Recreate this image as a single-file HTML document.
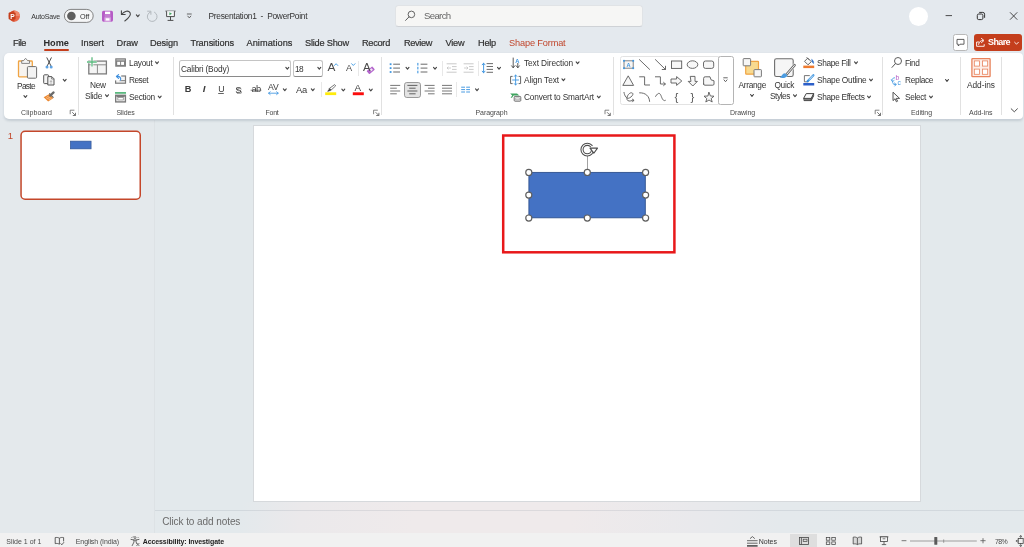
<!DOCTYPE html>
<html lang="en"><head><meta charset="utf-8"><title>Presentation1 - PowerPoint</title>
<style>
html,body{margin:0;padding:0;}
body{width:1024px;height:547px;overflow:hidden;position:relative;background:#e3e9ec;font-family:"Liberation Sans",sans-serif;}
.a{position:absolute;box-sizing:border-box;}
.t{position:absolute;white-space:pre;font-family:"Liberation Sans",sans-serif;}
#top{left:0;top:0;width:1024px;height:120px;background:#e4e9ee;}
#ribbon{left:4px;top:53px;width:1019px;height:66px;background:#fff;border-radius:5px 4px 4px 5px;box-shadow:0 1.2px 2.4px rgba(70,90,105,0.19);}
#search{left:395px;top:5px;width:248px;height:22px;background:#f6f6f5;border-radius:3.5px;border:1px solid #e0e3e6;border-bottom-color:#cfd2d6;}
#avatar{left:908.5px;top:7px;width:19px;height:19px;border-radius:50%;background:#fff;}
#comment{left:952.5px;top:34px;width:15.5px;height:16.6px;border-radius:2.5px;background:#fff;border:0.7px solid #b8b8b8;}
#share{left:973.5px;top:34px;width:48px;height:16.6px;border-radius:3px;background:#c43e1c;}
#homeul{left:43.5px;top:49px;width:25.5px;height:2px;background:#c43e1c;border-radius:1px;}
.sep{width:1px;background:#e1e1e1;}
.sep2{width:1px;background:#e8e8e8;}
#txt{position:absolute;left:0;top:0;width:1024px;height:547px;will-change:transform;}
#left{left:0;top:120px;width:154px;height:413px;background:#e4e9ec;}
#vdiv{left:154px;top:120px;width:1px;height:413px;background:#dde2e5;}
#work{left:155px;top:120px;width:869px;height:390px;background:#e3e9ec;}
#notes{left:155px;top:502px;width:869px;height:31px;background:linear-gradient(100deg,#e3e9ec 0%,#e3e9ec 10%,#ebe9eb 17%,#efeaeb 30%,#efeaeb 48%,#e9e9ec 62%,#e4e9ec 72%,#e3e9ec 100%);}
#notesline{left:155px;top:510px;width:869px;height:1px;background:rgba(120,130,140,0.16);}
#slide{left:253px;top:125px;width:668px;height:377px;background:#fff;border:1px solid #d6d9dc;}
#status{left:0;top:533px;width:1024px;height:14px;background:#f1f1f1;}
#thumb{left:20.3px;top:130.5px;width:120.7px;height:69.5px;background:#fff;border:1.3px solid #c2492c;border-radius:4.5px;}
#thumbrect{left:70px;top:140.8px;width:21.4px;height:8.4px;background:#4472c4;border:0.6px solid #2f528f;}
#fontbox{left:179px;top:60px;width:112px;height:16.5px;border:0.8px solid #c4c4c4;border-bottom-color:#8a8a8a;border-radius:2.5px;background:#fff;}
#sizebox{left:293px;top:60px;width:30px;height:16.5px;border:0.8px solid #c4c4c4;border-bottom-color:#8a8a8a;border-radius:2.5px;background:#fff;}
#centersel{left:404px;top:81.5px;width:16.5px;height:16px;border:0.8px solid #9a9a9a;border-radius:2.8px;background:#e3e3e3;}
#gallery{left:619.5px;top:56.3px;width:99px;height:48.7px;border:0.8px solid #e3e3e3;border-radius:2.5px 0 0 2.5px;background:#fff;}
#gallmore{left:717.5px;top:56px;width:16px;height:49px;border:0.8px solid #b4b4b4;border-radius:2.5px;background:#fff;}
#normsel{left:790.3px;top:534px;width:26.5px;height:13px;background:#dedede;}
#shape{left:528.5px;top:172px;width:117px;height:46px;background:#4472c4;border:0.8px solid #2f528f;}
#redbox{left:502px;top:134.3px;width:173.6px;height:119.2px;border:2.5px solid #e8191b;}
svg#ic{position:absolute;left:0;top:0;will-change:transform;}

</style></head>
<body>
<div class="a" id="top"></div>
<div class="a" id="left"></div>
<div class="a" id="work"></div>
<div class="a" id="vdiv"></div>
<div class="a" id="notes"></div>
<div class="a" id="notesline"></div>
<div class="a" id="status"></div>
<div class="a" id="normsel"></div>
<div class="a" id="ribbon"></div>
<div class="a" id="search"></div>
<div class="a" id="avatar"></div>
<div class="a" id="comment"></div>
<div class="a" id="share"></div>
<div class="a" id="homeul"></div>
<div class="a sep" style="left:78px;top:57px;height:58px"></div>
<div class="a sep" style="left:173px;top:57px;height:58px"></div>
<div class="a sep" style="left:381px;top:57px;height:58px"></div>
<div class="a sep" style="left:612.5px;top:57px;height:58px"></div>
<div class="a sep" style="left:882px;top:57px;height:58px"></div>
<div class="a sep" style="left:960px;top:57px;height:58px"></div>
<div class="a sep" style="left:1001px;top:57px;height:58px"></div>
<div class="a sep2" style="left:358px;top:60.5px;height:15.5px"></div>
<div class="a sep2" style="left:321px;top:82px;height:15px"></div>
<div class="a sep2" style="left:442px;top:60.5px;height:15.5px"></div>
<div class="a sep2" style="left:478px;top:60.5px;height:15.5px"></div>
<div class="a sep2" style="left:456px;top:82px;height:15px"></div>
<div class="a" id="fontbox"></div>
<div class="a" id="sizebox"></div>
<div class="a" id="centersel"></div>
<div class="a" id="gallery"></div>
<div class="a" id="gallmore"></div>
<div class="a" id="slide"></div>

<svg id="ic" width="1024" height="547" viewBox="0 0 1024 547" fill="none">
<circle cx="14.4" cy="16.1" r="5.6" fill="#e8694b"/>
<path d="M14.4,10.5 A5.6,5.6 0 0 0 14.4,21.7 Z" fill="#d24a2a"/>
<path d="M14.4,10.5 A5.6,5.6 0 0 1 20,16.1 H14.4 Z" fill="#f08a6c"/>
<rect x="8.6" y="12.6" width="7" height="7" rx="1" fill="#c43e1c"/>
<text x="10.2" y="18.6" font-family="Liberation Sans, sans-serif" font-weight="bold" font-size="6.6" fill="#fff">P</text>
<rect x="64.4" y="9.4" width="28.8" height="13" rx="6.5" fill="#f5f6f7" stroke="#666" stroke-width="0.8"/>
<circle cx="71.4" cy="16" r="4.3" fill="#5e5e5e"/>
<rect x="102" y="10.7" width="11" height="11" rx="1.6" fill="#b65bc6"/>
<rect x="105" y="11.6" width="5.2" height="2.6" fill="#fff"/>
<rect x="104.6" y="14.2" width="6" height="3.6" fill="#c47fd1"/>
<rect x="104.4" y="17.4" width="6.4" height="4.3" fill="#d9a8e2"/>
<rect x="105.8" y="18.3" width="3.6" height="2.2" fill="#fff"/>
<path d="M124.8,21 C128.5,18.3 131.6,15.3 130,12.6 C128.3,9.9 124.6,11.2 121.8,14" stroke="#444" stroke-width="1.05" stroke-linecap="round"/>
<path d="M121.4,10.8 V14.5 H125.2" stroke="#444" stroke-width="1.05" stroke-linecap="round" stroke-linejoin="round"/>
<path d="M136.35,14.90 L137.80,16.70 L139.25,14.90" stroke="#444" stroke-width="1.1" stroke-linecap="round" stroke-linejoin="round"/>
<path d="M150.6,11.9 A4.9,4.9 0 1 0 154.5,12.2" stroke="#b3b9be" stroke-width="1" stroke-linecap="round"/>
<path d="M147.6,11.2 H150.9 V14.4" stroke="#b3b9be" stroke-width="1" stroke-linecap="round" stroke-linejoin="round"/>
<path d="M165.4,11.1 L175.6,11.1" stroke="#444" stroke-width="0.8" stroke-linecap="butt"/>
<path d="M166.6,11.2 V16.6 H174.4 V11.2" fill="#f4f6f7" stroke="#444" stroke-width="0.95"/>
<path d="M169.4,12.3 V15.3 L172,13.8 Z" fill="#3fa45f"/>
<path d="M170.5,16.6 L170.5,20.2" stroke="#444" stroke-width="0.95" stroke-linecap="butt"/>
<path d="M167.6,20.4 L173.4,20.4" stroke="#444" stroke-width="0.95" stroke-linecap="butt"/>
<path d="M186.9,14 L191.7,14" stroke="#555" stroke-width="0.9" stroke-linecap="butt"/>
<path d="M187.80,16.10 L189.30,17.90 L190.80,16.10" stroke="#555" stroke-width="0.9" stroke-linecap="round" stroke-linejoin="round"/>
<circle cx="411.4" cy="14.4" r="3.3" stroke="#5c5c5c" stroke-width="0.95"/>
<path d="M409,16.9 L405.6,20.4" stroke="#5c5c5c" stroke-width="1" stroke-linecap="round"/>
<path d="M945.6,15.6 L952,15.6" stroke="#3a3a3a" stroke-width="0.9" stroke-linecap="butt"/>
<rect x="977.3" y="14" width="5.6" height="5.6" rx="1.4" stroke="#333" stroke-width="1"/>
<path d="M979.2,12.4 H982.8 A1.8,1.8 0 0 1 984.6,14.2 V17.8" stroke="#333" stroke-width="1"/>
<path d="M1010.3,12.6 L1017,19.4 M1017,12.6 L1010.3,19.4" stroke="#3a3a3a" stroke-width="0.9" stroke-linecap="round"/>
<path d="M957,39.4 H964 V44.2 H960 L958.3,46 V44.2 H957 Z" stroke="#444" stroke-width="0.85" stroke-linejoin="round"/>
<path d="M979.2,42 H976.6 V46.3 H984.2 V44.2" stroke="#fff" stroke-width="0.9" stroke-linejoin="round"/>
<path d="M978.6,44.4 C979,41.8 980.6,40.6 982.6,40.5 M981.4,38.4 L984,40.5 L981.4,42.7" stroke="#fff" stroke-width="0.9" stroke-linecap="round" stroke-linejoin="round"/>
<path d="M1014.60,42.25 L1016.50,44.15 L1018.40,42.25" stroke="#fff" stroke-width="0.9" stroke-linecap="round" stroke-linejoin="round"/>
<rect x="18.5" y="61" width="13.8" height="15.8" rx="0.8" fill="#f7f4f0" stroke="#f0a443" stroke-width="1.3"/>
<path d="M21.7,63.4 V60.7 H23.5 L25.6,58.3 L27.7,60.7 H29.5 V63.4 Z" fill="#f4f4f4" stroke="#7a7a7a" stroke-width="0.9" stroke-linejoin="round"/>
<rect x="27.4" y="66.6" width="9.2" height="11.6" rx="1" fill="#f3f3f3" stroke="#6e6e6e" stroke-width="1"/>
<path d="M23.95,95.60 L25.40,97.40 L26.85,95.60" stroke="#444" stroke-width="1.1" stroke-linecap="round" stroke-linejoin="round"/>
<path d="M46.9,57.8 L50.8,65.6 M51.3,57.8 L47.4,65.6" stroke="#4a4a4a" stroke-width="1" stroke-linecap="round"/>
<circle cx="47" cy="66.9" r="1.5" fill="#5ea3e4"/><circle cx="51.2" cy="66.9" r="1.5" fill="#5ea3e4"/>
<rect x="43.7" y="74.8" width="4.9" height="8.8" rx="0.8" fill="#f4f4f4" stroke="#555" stroke-width="1"/>
<path d="M47.8,76.6 H51.8 L54,78.8 V85 H47.8 Z" fill="#f1f1f1" stroke="#555" stroke-width="1" stroke-linejoin="round"/>
<path d="M51.6,76.8 V79 H53.8" stroke="#5e5e5e" stroke-width="0.7"/>
<path d="M49.8,81.4 H52.2 M51,80 V84" stroke="#9a9a9a" stroke-width="0.6"/>
<path d="M63.25,79.40 L64.70,81.20 L66.15,79.40" stroke="#444" stroke-width="1.1" stroke-linecap="round" stroke-linejoin="round"/>
<path d="M43.6,97.2 L49.8,93.8 L53.2,98.2 L48.2,101.6 Z" fill="#ec8a33"/>
<path d="M46,97.6 L50.4,99.8 M47.2,96.4 L51.6,98.7" stroke="#fbd9b8" stroke-width="0.6"/>
<path d="M50.2,95.6 L53.6,92.4" stroke="#6a6a6a" stroke-width="2.2" stroke-linecap="round"/>
<path d="M49.6,93.6 L53.2,97.4" stroke="#6a6a6a" stroke-width="1.1" stroke-linecap="round"/>
<path d="M70.2,114.2 V110.2 H74.4" stroke="#666" stroke-width="0.8"/>
<path d="M72.2,112.2 L75.4,115.4 M75.5,112.8 V115.5 H72.8" stroke="#555" stroke-width="0.8"/>
<rect x="88.8" y="61.1" width="17.6" height="12.8" fill="#f4f4f4" stroke="#7d7d7d" stroke-width="1.3"/>
<path d="M88.8,64.8 H106.4 M97.4,64.8 V73.9" stroke="#8a8a8a" stroke-width="1"/>
<path d="M87,62 H96.8 M92,57.3 V66.5" stroke="#fff" stroke-width="2.6"/>
<path d="M87,62 H96.8 M92,57.3 V66.5" stroke="#5bb97f" stroke-width="1.3"/>
<path d="M105.55,94.80 L107.00,96.60 L108.45,94.80" stroke="#444" stroke-width="1.1" stroke-linecap="round" stroke-linejoin="round"/>
<rect x="115.2" y="58.2" width="10.8" height="8.5" rx="0.5" fill="#808080"/>
<rect x="116.4" y="59.5" width="8.4" height="0.9" fill="#d4d4d4"/>
<rect x="117.2" y="61.8" width="2.9" height="3.1" fill="#fff"/>
<rect x="121.1" y="61.8" width="2.9" height="3.1" fill="#fff"/>
<path d="M155.55,61.90 L157.00,63.70 L158.45,61.90" stroke="#444" stroke-width="1.1" stroke-linecap="round" stroke-linejoin="round"/>
<rect x="115.6" y="76" width="9.9" height="7.2" fill="#f4f4f4" stroke="#7b7b7b" stroke-width="1.2"/>
<path d="M119.4,80.6 H125" stroke="#8d8d8d" stroke-width="1.2"/>
<path d="M114.8,74 h6.4 v6.4 h-6.4 Z" fill="#fff"/>
<path d="M120.6,80.2 C121.2,77.6 119.8,76.2 117,76.4" stroke="#3f8fdd" stroke-width="1.1" stroke-linecap="round"/>
<path d="M118.6,74.6 L116.4,76.5 L118.6,78.4" stroke="#3f8fdd" stroke-width="1.1" stroke-linecap="round" stroke-linejoin="round"/>
<rect x="115" y="92" width="11" height="1.8" fill="#5bb97f"/>
<rect x="115.7" y="95.3" width="9.7" height="6.6" fill="#fff" stroke="#7b7b7b" stroke-width="1.4"/>
<rect x="117.8" y="97.4" width="5.5" height="2.6" fill="#fff" stroke="#8c8c8c" stroke-width="0.8"/>
<path d="M116.4,96.4 H124.7" stroke="#7b7b7b" stroke-width="1.2"/>
<path d="M158.25,96.10 L159.70,97.90 L161.15,96.10" stroke="#444" stroke-width="1.1" stroke-linecap="round" stroke-linejoin="round"/>
<path d="M285.85,67.40 L287.30,69.20 L288.75,67.40" stroke="#444" stroke-width="1.1" stroke-linecap="round" stroke-linejoin="round"/>
<path d="M317.85,67.40 L319.30,69.20 L320.75,67.40" stroke="#444" stroke-width="1.1" stroke-linecap="round" stroke-linejoin="round"/>
<path d="M334.4,65.5 L336.1,63.7 L337.8,65.5" stroke="#4fa3e6" stroke-width="1" stroke-linecap="round" stroke-linejoin="round"/>
<path d="M351.6,63.7 L353.3,65.5 L355,63.7" stroke="#4fa3e6" stroke-width="1" stroke-linecap="round" stroke-linejoin="round"/>
<g transform="translate(370.7,70.3) rotate(-40)"><rect x="-3.7" y="-2.1" width="7.4" height="4.2" rx="0.6" fill="#b366cc"/><rect x="-0.6" y="-1.1" width="2.6" height="2.2" fill="#f3e4f7"/></g>
<path d="M218.2,93.5 L223.8,93.5" stroke="#3b3b3b" stroke-width="0.8" stroke-linecap="butt"/>
<path d="M250.6,90.2 L261.4,90.2" stroke="#555" stroke-width="0.7" stroke-linecap="butt"/>
<path d="M268.6,93.2 H278.2 M270.2,91.8 L268.6,93.2 L270.2,94.6 M276.6,91.8 L278.2,93.2 L276.6,94.6" stroke="#3f96e0" stroke-width="0.85" stroke-linecap="round" stroke-linejoin="round"/>
<path d="M283.35,88.90 L284.80,90.70 L286.25,88.90" stroke="#444" stroke-width="1.1" stroke-linecap="round" stroke-linejoin="round"/>
<path d="M311.35,88.90 L312.80,90.70 L314.25,88.90" stroke="#444" stroke-width="1.1" stroke-linecap="round" stroke-linejoin="round"/>
<path d="M334.6,84.6 L335.7,85.8 L330.6,90.6 L328.8,88.9 Z" fill="#fff" stroke="#555" stroke-width="0.8" stroke-linejoin="round"/>
<path d="M329.8,88.2 L331.3,89.8 L329,91.4 H327 Z" fill="#4a4a4a"/>
<rect x="325.2" y="92.3" width="11" height="2.8" fill="#ffeb0a"/>
<path d="M341.85,89.10 L343.30,90.90 L344.75,89.10" stroke="#444" stroke-width="1.1" stroke-linecap="round" stroke-linejoin="round"/>
<rect x="352.8" y="92.3" width="11" height="2.9" fill="#fb0d0d"/>
<path d="M369.35,89.10 L370.80,90.90 L372.25,89.10" stroke="#444" stroke-width="1.1" stroke-linecap="round" stroke-linejoin="round"/>
<path d="M373.6,114.2 V110.2 H377.8" stroke="#666" stroke-width="0.8"/>
<path d="M375.6,112.2 L378.8,115.4 M378.90000000000003,112.8 V115.5 H376.20000000000005" stroke="#555" stroke-width="0.8"/>
<rect x="389.7" y="63.300000000000004" width="1.8" height="1.8" fill="#3f96e0"/>
<path d="M393.2,64.2 L400,64.2" stroke="#707070" stroke-width="1.05" stroke-linecap="butt"/>
<rect x="389.7" y="67.19999999999999" width="1.8" height="1.8" fill="#3f96e0"/>
<path d="M393.2,68.1 L400,68.1" stroke="#707070" stroke-width="1.05" stroke-linecap="butt"/>
<rect x="389.7" y="71.1" width="1.8" height="1.8" fill="#3f96e0"/>
<path d="M393.2,72 L400,72" stroke="#707070" stroke-width="1.05" stroke-linecap="butt"/>
<path d="M406.05,67.40 L407.50,69.20 L408.95,67.40" stroke="#444" stroke-width="1.1" stroke-linecap="round" stroke-linejoin="round"/>
<rect x="417.3" y="62.900000000000006" width="1.1" height="2.6" fill="#3f96e0"/>
<path d="M420.6,64.2 L427.4,64.2" stroke="#707070" stroke-width="1.05" stroke-linecap="butt"/>
<rect x="417.3" y="66.8" width="1.1" height="2.6" fill="#3f96e0"/>
<path d="M420.6,68.1 L427.4,68.1" stroke="#707070" stroke-width="1.05" stroke-linecap="butt"/>
<rect x="417.3" y="70.7" width="1.1" height="2.6" fill="#3f96e0"/>
<path d="M420.6,72 L427.4,72" stroke="#707070" stroke-width="1.05" stroke-linecap="butt"/>
<path d="M433.55,67.40 L435.00,69.20 L436.45,67.40" stroke="#444" stroke-width="1.1" stroke-linecap="round" stroke-linejoin="round"/>
<path d="M446.6,63.8 L456.6,63.8" stroke="#c4c4c4" stroke-width="0.9" stroke-linecap="butt"/>
<path d="M446.6,72.2 L456.6,72.2" stroke="#c4c4c4" stroke-width="0.9" stroke-linecap="butt"/>
<path d="M452.0,66.6 L456.6,66.6" stroke="#c4c4c4" stroke-width="0.9" stroke-linecap="butt"/>
<path d="M452.0,69.4 L456.6,69.4" stroke="#c4c4c4" stroke-width="0.9" stroke-linecap="butt"/>
<path d="M463.6,63.8 L473.6,63.8" stroke="#c4c4c4" stroke-width="0.9" stroke-linecap="butt"/>
<path d="M463.6,72.2 L473.6,72.2" stroke="#c4c4c4" stroke-width="0.9" stroke-linecap="butt"/>
<path d="M469.0,66.6 L473.6,66.6" stroke="#c4c4c4" stroke-width="0.9" stroke-linecap="butt"/>
<path d="M469.0,69.4 L473.6,69.4" stroke="#c4c4c4" stroke-width="0.9" stroke-linecap="butt"/>
<path d="M451,68 H447 M448.4,66.6 L447,68 L448.4,69.4" stroke="#c4c4c4" stroke-width="0.8"/>
<path d="M464,68 H468 M466.6,66.6 L468,68 L466.6,69.4" stroke="#c4c4c4" stroke-width="0.8"/>
<path d="M486.6,63.6 L493,63.6" stroke="#707070" stroke-width="1.05" stroke-linecap="butt"/>
<path d="M486.6,66.5 L493,66.5" stroke="#707070" stroke-width="1.05" stroke-linecap="butt"/>
<path d="M486.6,69.4 L493,69.4" stroke="#707070" stroke-width="1.05" stroke-linecap="butt"/>
<path d="M486.6,72.3 L493,72.3" stroke="#707070" stroke-width="1.05" stroke-linecap="butt"/>
<path d="M483.6,63.2 V72.8 M482.2,64.8 L483.6,63.2 L485,64.8 M482.2,71.2 L483.6,72.8 L485,71.2" stroke="#3f96e0" stroke-width="0.95" stroke-linecap="round" stroke-linejoin="round"/>
<path d="M497.55,67.40 L499.00,69.20 L500.45,67.40" stroke="#444" stroke-width="1.1" stroke-linecap="round" stroke-linejoin="round"/>
<path d="M390.2,85.4 L400.2,85.4" stroke="#707070" stroke-width="0.95" stroke-linecap="butt"/>
<path d="M390.2,88.2 L396.8,88.2" stroke="#707070" stroke-width="0.95" stroke-linecap="butt"/>
<path d="M390.2,91 L400.2,91" stroke="#707070" stroke-width="0.95" stroke-linecap="butt"/>
<path d="M390.2,93.8 L396.8,93.8" stroke="#707070" stroke-width="0.95" stroke-linecap="butt"/>
<path d="M407.4,85.4 L417.4,85.4" stroke="#5a5a5a" stroke-width="0.95" stroke-linecap="butt"/>
<path d="M409.2,88.2 L415.59999999999997,88.2" stroke="#5a5a5a" stroke-width="0.95" stroke-linecap="butt"/>
<path d="M407.4,91 L417.4,91" stroke="#5a5a5a" stroke-width="0.95" stroke-linecap="butt"/>
<path d="M409.2,93.8 L415.59999999999997,93.8" stroke="#5a5a5a" stroke-width="0.95" stroke-linecap="butt"/>
<path d="M424.6,85.4 L434.6,85.4" stroke="#707070" stroke-width="0.95" stroke-linecap="butt"/>
<path d="M428.0,88.2 L434.6,88.2" stroke="#707070" stroke-width="0.95" stroke-linecap="butt"/>
<path d="M424.6,91 L434.6,91" stroke="#707070" stroke-width="0.95" stroke-linecap="butt"/>
<path d="M428.0,93.8 L434.6,93.8" stroke="#707070" stroke-width="0.95" stroke-linecap="butt"/>
<path d="M442,85.4 L452,85.4" stroke="#707070" stroke-width="0.95" stroke-linecap="butt"/>
<path d="M442,88.2 L452,88.2" stroke="#707070" stroke-width="0.95" stroke-linecap="butt"/>
<path d="M442,91 L452,91" stroke="#707070" stroke-width="0.95" stroke-linecap="butt"/>
<path d="M442,93.8 L452,93.8" stroke="#707070" stroke-width="0.95" stroke-linecap="butt"/>
<path d="M461.2,87.2 L465,87.2" stroke="#3f96e0" stroke-width="0.95" stroke-linecap="butt"/>
<path d="M466.2,87.2 L470,87.2" stroke="#3f96e0" stroke-width="0.95" stroke-linecap="butt"/>
<path d="M461.2,89.6 L465,89.6" stroke="#3f96e0" stroke-width="0.95" stroke-linecap="butt"/>
<path d="M466.2,89.6 L470,89.6" stroke="#3f96e0" stroke-width="0.95" stroke-linecap="butt"/>
<path d="M461.2,92 L465,92" stroke="#3f96e0" stroke-width="0.95" stroke-linecap="butt"/>
<path d="M466.2,92 L470,92" stroke="#3f96e0" stroke-width="0.95" stroke-linecap="butt"/>
<path d="M475.55,88.90 L477.00,90.70 L478.45,88.90" stroke="#444" stroke-width="1.1" stroke-linecap="round" stroke-linejoin="round"/>
<path d="M513.2,58 V67.6 M511.6,65.8 L513.2,67.8 L514.8,65.8 M517.8,63.4 V67.6 M516.2,65.8 L517.8,67.8 L519.4,65.8" stroke="#4a4a4a" stroke-width="0.9" stroke-linecap="round" stroke-linejoin="round"/>
<text x="515.3" y="62.6" font-family="Liberation Sans, sans-serif" font-weight="bold" font-size="5.8" fill="#3f96e0">A</text>
<path d="M576.15,61.90 L577.60,63.70 L579.05,61.90" stroke="#444" stroke-width="1.1" stroke-linecap="round" stroke-linejoin="round"/>
<path d="M512.6,76.4 H510.6 V83.6 H512.6 M518.6,76.4 H520.6 V83.6 H518.6" stroke="#555" stroke-width="0.9"/>
<path d="M515.6,75 V85 M514.3,76.4 L515.6,75 L516.9,76.4 M514.3,83.6 L515.6,85 L516.9,83.6 M512.6,80 H518.6" stroke="#3f96e0" stroke-width="0.9" stroke-linecap="round" stroke-linejoin="round"/>
<path d="M561.95,78.90 L563.40,80.70 L564.85,78.90" stroke="#444" stroke-width="1.1" stroke-linecap="round" stroke-linejoin="round"/>
<path d="M510.2,93.4 H517 L519.4,95.6 H513.6 L512,97.8 H510.6 L512.2,95.6 Z" fill="#3fa45f"/>
<rect x="514.2" y="96.4" width="6.6" height="4.8" rx="0.8" fill="#e9e9e9" stroke="#666" stroke-width="0.9"/>
<rect x="515.8" y="98" width="3.4" height="1.8" fill="#fff" stroke="#888" stroke-width="0.5"/>
<path d="M597.35,96.10 L598.80,97.90 L600.25,96.10" stroke="#444" stroke-width="1.1" stroke-linecap="round" stroke-linejoin="round"/>
<path d="M605,114.2 V110.2 H609.2" stroke="#666" stroke-width="0.8"/>
<path d="M607,112.2 L610.2,115.4 M610.3,112.8 V115.5 H607.6" stroke="#555" stroke-width="0.8"/>
<rect x="624" y="60.8" width="9.2" height="7.4" rx="0" stroke="#777" fill="#f7f7f7" stroke-width="0.9"/>
<rect x="623.1" y="59.9" width="1.8" height="1.8" fill="#3f96e0"/>
<rect x="632.3000000000001" y="59.9" width="1.8" height="1.8" fill="#3f96e0"/>
<rect x="623.1" y="67.3" width="1.8" height="1.8" fill="#3f96e0"/>
<rect x="632.3000000000001" y="67.3" width="1.8" height="1.8" fill="#3f96e0"/>
<text x="626.6" y="67.1" font-family="Liberation Sans, sans-serif" font-weight="bold" font-size="5.6" fill="#3f96e0">A</text>
<path d="M639.4,59.6 L649.6,69.4" stroke="#5a5a5a" fill="none" stroke-width="0.9" stroke-linecap="round" stroke-linejoin="round" />
<path d="M655.4,59.6 L665.4,69.4 M665.5,66.2 V69.5 H662.2" stroke="#5a5a5a" fill="none" stroke-width="0.9" stroke-linecap="round" stroke-linejoin="round" />
<rect x="671.5" y="61" width="10.2" height="7.4" rx="0" stroke="#5a5a5a" fill="#f7f7f7" stroke-width="0.9"/>
<ellipse cx="692.5" cy="64.6" rx="5.3" ry="3.8" stroke="#5a5a5a" fill="#f7f7f7" stroke-width="0.9"/>
<rect x="703.5" y="61" width="10.2" height="7.4" rx="2" stroke="#5a5a5a" fill="#f7f7f7" stroke-width="0.9"/>
<path d="M628.4,76.2 L633.6,85.4 H623.2 Z" stroke="#5a5a5a" fill="#f7f7f7" stroke-width="0.9" stroke-linecap="round" stroke-linejoin="round" />
<path d="M639.6,76.8 H644.6 V85 H649.6" stroke="#5a5a5a" fill="none" stroke-width="0.9" stroke-linecap="round" stroke-linejoin="round" />
<path d="M655.4,76.8 H660.4 V84 H665.2 M663.6,82.4 L665.4,84 L663.6,85.6" stroke="#5a5a5a" fill="none" stroke-width="0.9" stroke-linecap="round" stroke-linejoin="round" />
<path d="M671.4,79 H676.6 V76.6 L681.8,81 L676.6,85.4 V83 H671.4 Z" stroke="#5a5a5a" fill="#f7f7f7" stroke-width="0.9" stroke-linecap="round" stroke-linejoin="round" />
<path d="M690.6,76.4 H695 V81.4 H697.4 L692.8,86 L688.2,81.4 H690.6 Z" stroke="#5a5a5a" fill="#f7f7f7" stroke-width="0.9" stroke-linecap="round" stroke-linejoin="round" />
<path d="M703.6,84 V78.4 Q703.6,76.8 705.2,76.8 H710 A4,4 0 0 0 714,80.8 V84 Q714,85.2 712.8,85.2 H704.8 Q703.6,85.2 703.6,84 Z" stroke="#5a5a5a" fill="#f7f7f7" stroke-width="0.9" stroke-linecap="round" stroke-linejoin="round" />
<path d="M624,92.4 C624.6,96 626.6,99 628.8,98.2 C632,97 634.6,93.4 631.6,92.8 C628.6,92.4 625.4,98.4 627.6,100.4 C629.4,102 632.2,100.2 633.8,100.2 L632.6,101.8 M633.8,100.2 L632.4,99.2" stroke="#5a5a5a" fill="none" stroke-width="0.9" stroke-linecap="round" stroke-linejoin="round" />
<path d="M639.6,92.8 C645.6,92.6 649.4,96.2 649.6,101.4" stroke="#5a5a5a" fill="none" stroke-width="0.9" stroke-linecap="round" stroke-linejoin="round" />
<path d="M655.6,96.4 C658.6,91.4 660.2,93.2 661.4,96.6 C662.6,100 664,101.4 665.4,100.4" stroke="#5a5a5a" fill="none" stroke-width="0.9" stroke-linecap="round" stroke-linejoin="round" />
<text x="674.4" y="100.6" font-family="Liberation Sans, sans-serif" font-size="11.4" fill="#555">{</text>
<text x="690.6" y="100.6" font-family="Liberation Sans, sans-serif" font-size="11.4" fill="#555">}</text>
<path d="M709,92.4 L710.4,96 L714,96.2 L711.2,98.6 L712.2,102 L709,100 L705.8,102 L706.8,98.6 L704,96.2 L707.6,96 Z" stroke="#5a5a5a" fill="#f7f7f7" stroke-width="0.9" stroke-linecap="round" stroke-linejoin="round" />
<path d="M723.3,77.8 L727.7,77.8" stroke="#555" stroke-width="0.9" stroke-linecap="butt"/>
<path d="M724.00,79.90 L725.50,81.70 L727.00,79.90" stroke="#555" stroke-width="0.9" stroke-linecap="round" stroke-linejoin="round"/>
<rect x="745.7" y="61.4" width="12.8" height="12.8" rx="0.6" stroke="#f0a443" fill="#f8da90" stroke-width="1.2"/>
<rect x="743.2" y="58.6" width="7.4" height="7.2" rx="0.6" stroke="#7a7a7a" fill="#f6f6f6" stroke-width="1"/>
<rect x="754" y="69.6" width="7.4" height="7.2" rx="0.6" stroke="#7a7a7a" fill="#f6f6f6" stroke-width="1"/>
<path d="M750.55,94.50 L752.00,96.30 L753.45,94.50" stroke="#444" stroke-width="1.1" stroke-linecap="round" stroke-linejoin="round"/>
<rect x="774.6" y="58.7" width="18.6" height="17.8" rx="1.8" stroke="#6e6e6e" fill="#f6f6f6" stroke-width="1.1"/>
<path d="M794.6,65.2 L786,75" stroke="#fff" stroke-width="3.6" stroke-linecap="round"/>
<path d="M794.6,65.2 L786.4,74.6" stroke="#6e6e6e" stroke-width="2.6" stroke-linecap="round"/>
<path d="M794.4,65.4 L786.8,74.2" stroke="#f3f3f3" stroke-width="1" stroke-linecap="round"/>
<path d="M785,73.2 C782,73.4 782,76.4 779.6,77.6 C783,78.8 787,77.6 787.4,75.2 Z" fill="#4a9be0"/>
<path d="M793.55,94.80 L795.00,96.60 L796.45,94.80" stroke="#444" stroke-width="1.1" stroke-linecap="round" stroke-linejoin="round"/>
<path d="M808,58.4 L811.3,61.7 L808,64.8 L804.8,61.6 Z" stroke="#555" fill="#fafafa" stroke-width="0.9" stroke-linecap="round" stroke-linejoin="round" />
<path d="M806.9,57.5 L809,59.6" stroke="#555" fill="none" stroke-width="0.9" stroke-linecap="round" stroke-linejoin="round" />
<path d="M811.7,59.3 C813.3,60.4 813.9,62 813.5,63.6 C812.3,62.6 811.7,61.2 811.7,59.3 Z" fill="#2d6fc9" stroke="#2d6fc9" stroke-width="0.5"/>
<rect x="803.3" y="65.6" width="10.9" height="2.5" fill="#ee7b30"/>
<path d="M854.55,61.90 L856.00,63.70 L857.45,61.90" stroke="#444" stroke-width="1.1" stroke-linecap="round" stroke-linejoin="round"/>
<path d="M809.4,75.6 H804.4 V81.8 H808" stroke="#666" fill="none" stroke-width="0.9" stroke-linecap="round" stroke-linejoin="round" />
<path d="M813.4,75.2 L807.6,81.2" stroke="#3f96e0" stroke-width="2.2" stroke-linecap="round"/>
<path d="M812.8,75.8 L809.4,79.4" stroke="#e4f1fd" stroke-width="0.9" stroke-linecap="round"/>
<path d="M806.6,82.2 L807.2,80.4 L808.6,81.6 Z" fill="#2f86e0"/>
<rect x="803.3" y="83" width="10.9" height="2.5" fill="#2c5fc9"/>
<path d="M869.55,79.10 L871.00,80.90 L872.45,79.10" stroke="#444" stroke-width="1.1" stroke-linecap="round" stroke-linejoin="round"/>
<path d="M806.6,93.6 H813.6 L811.2,98.4 H804 Z" stroke="#444" fill="#fafafa" stroke-width="1" stroke-linecap="round" stroke-linejoin="round" />
<path d="M804,98.4 V100.6 H811.2 L813.6,95.8 V93.6 M811.2,98.4 V100.6" stroke="#444" fill="none" stroke-width="1" stroke-linecap="round" stroke-linejoin="round" />
<path d="M804.3,99.7 H811.1 L813.3,95.6" stroke="#555" stroke-width="1.1" fill="none"/>
<path d="M867.55,96.10 L869.00,97.90 L870.45,96.10" stroke="#444" stroke-width="1.1" stroke-linecap="round" stroke-linejoin="round"/>
<path d="M875.2,114.2 V110.2 H879.4000000000001" stroke="#666" stroke-width="0.8"/>
<path d="M877.2,112.2 L880.4000000000001,115.4 M880.5,112.8 V115.5 H877.8000000000001" stroke="#555" stroke-width="0.8"/>
<circle cx="898" cy="61" r="3.5" stroke="#555" stroke-width="0.95"/>
<path d="M895.4,63.6 L892,67.4" stroke="#555" stroke-width="1" stroke-linecap="round"/>
<text x="895.4" y="79.8" font-family="Liberation Sans, sans-serif" font-size="6.6" fill="#b357c4">b</text>
<text x="897.4" y="85.4" font-family="Liberation Sans, sans-serif" font-size="6.6" fill="#3f96e0">c</text>
<path d="M894.6,77.8 C892,78 891.4,80 892.4,81.4 M891.4,79.8 L892.4,81.6 L894,80.6 M892.6,82.6 C893,84.6 894.6,85 896,84.4 M894.4,83 L896.2,84.4 L894.8,86" stroke="#3f96e0" stroke-width="0.85" stroke-linecap="round" stroke-linejoin="round"/>
<path d="M945.55,79.50 L947.00,81.30 L948.45,79.50" stroke="#444" stroke-width="1.1" stroke-linecap="round" stroke-linejoin="round"/>
<path d="M893,92.6 V100.6 L895,98.8 L896.4,101.8 L897.6,101.2 L896.2,98.4 H899.2 Z" stroke="#444" fill="#fafafa" stroke-width="0.9" stroke-linecap="round" stroke-linejoin="round" />
<path d="M929.55,96.10 L931.00,97.90 L932.45,96.10" stroke="#444" stroke-width="1.1" stroke-linecap="round" stroke-linejoin="round"/>
<rect x="971.9" y="58.6" width="18.2" height="18" rx="0.6" stroke="#e8825c" fill="#fdeee8" stroke-width="1.3"/>
<rect x="974.3" y="60.9" width="5.2" height="5.2" rx="0" stroke="#e8825c" fill="#fff" stroke-width="0.8"/>
<rect x="974.3" y="69.1" width="5.2" height="5.2" rx="0" stroke="#e8825c" fill="#fff" stroke-width="0.8"/>
<rect x="982.5" y="60.9" width="5.2" height="5.2" rx="0" stroke="#e8825c" fill="#fff" stroke-width="0.8"/>
<rect x="982.5" y="69.1" width="5.2" height="5.2" rx="0" stroke="#e8825c" fill="#fff" stroke-width="0.8"/>
<path d="M1011.2,108.8 L1014.3,111.8 L1017.4,108.8" stroke="#444" stroke-width="0.95" stroke-linecap="round" stroke-linejoin="round"/>
<rect x="21.05" y="131.25" width="119.2" height="68" rx="4" fill="#fff" stroke="#c4472a" stroke-width="1.5"/>
<rect x="70.3" y="141.1" width="20.8" height="7.8" fill="#4472c4" stroke="#2f528f" stroke-width="0.6"/>
<rect x="528.9" y="172.4" width="116.4" height="45.4" fill="#4472c4" stroke="#2f528f" stroke-width="0.9"/>
<rect x="503.2" y="135.5" width="171.2" height="116.8" fill="none" stroke="#e8181a" stroke-width="2.5"/>
<path d="M587.5,156 V170" stroke="#8a8a8a" stroke-width="0.8"/>
<circle cx="587.3" cy="149.6" r="5.3" fill="#fff" stroke="#4d4d4d" stroke-width="3.2"/>
<circle cx="587.3" cy="149.6" r="5.3" fill="none" stroke="#fff" stroke-width="1.1"/>
<path d="M587.3,149.6 L596,143.6 L596.6,149 Z" fill="#fff"/>
<path d="M590,148.1 H597.5 L593.8,153.2 Z" fill="#fff" stroke="#4d4d4d" stroke-width="1.1" stroke-linejoin="round"/>
<circle cx="528.8" cy="172.4" r="3.05" fill="#fff" stroke="#5f5f5f" stroke-width="1.15"/>
<circle cx="528.8" cy="195.1" r="3.05" fill="#fff" stroke="#5f5f5f" stroke-width="1.15"/>
<circle cx="528.8" cy="218" r="3.05" fill="#fff" stroke="#5f5f5f" stroke-width="1.15"/>
<circle cx="587.3" cy="172.4" r="3.05" fill="#fff" stroke="#5f5f5f" stroke-width="1.15"/>
<circle cx="587.3" cy="218" r="3.05" fill="#fff" stroke="#5f5f5f" stroke-width="1.15"/>
<circle cx="645.6" cy="172.4" r="3.05" fill="#fff" stroke="#5f5f5f" stroke-width="1.15"/>
<circle cx="645.6" cy="195.1" r="3.05" fill="#fff" stroke="#5f5f5f" stroke-width="1.15"/>
<circle cx="645.6" cy="218" r="3.05" fill="#fff" stroke="#5f5f5f" stroke-width="1.15"/>
<path d="M59.4,538.2 C58.2,537.4 56.6,537.3 55.2,537.6 V543.6 C56.6,543.3 58.2,543.4 59.4,544.2 M59.4,538.2 C60.6,537.4 62.2,537.3 63.6,537.6 V541.4 M59.4,538.2 V544.2" stroke="#444" stroke-width="0.85" stroke-linejoin="round"/>
<path d="M60.6,543.4 L61.8,544.8 L64,542.2" stroke="#444" stroke-width="0.85" fill="none"/>
<circle cx="135" cy="537.6" r="1" stroke="#444" stroke-width="0.7"/>
<path d="M131,539.4 L134,540 V542 L132.2,545.6 M139,539.4 L136,540 V542 L137,543.6 M134,540 H136" stroke="#444" stroke-width="0.8" stroke-linecap="round" stroke-linejoin="round"/>
<path d="M136.4,543 L139.4,546 M139.4,543 L136.4,546" stroke="#444" stroke-width="0.7"/>
<path d="M131.4,537 L132.4,538 M138.6,537 L137.6,538 M133,536 L133.4,536.8" stroke="#444" stroke-width="0.6"/>
<path d="M750.3,538.4 L752.4,536.6 L754.5,538.4" stroke="#444" stroke-width="0.8" stroke-linecap="round" stroke-linejoin="round"/>
<path d="M747,540.7 L757.6,540.7" stroke="#444" stroke-width="0.8" stroke-linecap="butt"/>
<path d="M747,543.2 L757.6,543.2" stroke="#444" stroke-width="0.8" stroke-linecap="butt"/>
<path d="M747,545.9 L757.6,545.9" stroke="#444" stroke-width="1.5" stroke-linecap="butt"/>
<rect x="799.4" y="537.6" width="9" height="6.8" rx="0" stroke="#444" fill="none" stroke-width="0.8"/>
<path d="M801.4,537.6 L801.4,544.4" stroke="#444" stroke-width="0.8" stroke-linecap="butt"/>
<rect x="803.2" y="539.2" width="3.8" height="2.4" rx="0" stroke="#444" fill="none" stroke-width="0.7"/>
<rect x="826.3" y="537.6" width="3.5" height="2.6" rx="0" stroke="#444" fill="none" stroke-width="0.75"/>
<rect x="826.3" y="541.9" width="3.5" height="2.6" rx="0" stroke="#444" fill="none" stroke-width="0.75"/>
<rect x="831.8" y="537.6" width="3.5" height="2.6" rx="0" stroke="#444" fill="none" stroke-width="0.75"/>
<rect x="831.8" y="541.9" width="3.5" height="2.6" rx="0" stroke="#444" fill="none" stroke-width="0.75"/>
<path d="M857.4,538 C856.2,537 854.6,536.9 853.2,537.2 V544 C854.6,543.7 856.2,543.8 857.4,544.6 C858.6,543.8 860.2,543.7 861.6,544 V537.2 C860.2,536.9 858.6,537 857.4,538 V544.6" stroke="#444" stroke-width="0.8" fill="#d8d8d8" stroke-linejoin="round"/>
<path d="M879.6,536.9 L888.4,536.9" stroke="#444" stroke-width="0.8" stroke-linecap="butt"/>
<rect x="880.6" y="536.9" width="6.8" height="4.6" rx="0" stroke="#444" fill="#f6f6f6" stroke-width="0.8"/>
<path d="M882.6,538.8 L885.4,538.8" stroke="#444" stroke-width="0.7" stroke-linecap="butt"/>
<path d="M884,541.5 L884,544.4" stroke="#444" stroke-width="0.8" stroke-linecap="butt"/>
<path d="M881.8,544.6 L886.2,544.6" stroke="#444" stroke-width="0.8" stroke-linecap="butt"/>
<path d="M901.6,540.7 L906.4,540.7" stroke="#555" stroke-width="0.8" stroke-linecap="butt"/>
<path d="M910,541 L976.8,541" stroke="#7a7a7a" stroke-width="0.7" stroke-linecap="butt"/>
<path d="M943.7,539.4 L943.7,542.8" stroke="#7a7a7a" stroke-width="0.7" stroke-linecap="butt"/>
<rect x="934.3" y="537" width="3" height="7.8" rx="0.6" fill="#5a5a5a"/>
<path d="M980.4,540.7 H985.6 M983,538.2 V543.3" stroke="#555" stroke-width="0.8"/>
<rect x="1018.2" y="538.4" width="5" height="5" stroke="#444" stroke-width="0.8"/>
<path d="M1020.7,535.6 V538.4 M1020.7,543.4 V546.4 M1016.2,541 H1018.2 M1019.6,536.8 L1020.7,535.6 L1021.8,536.8 M1019.6,545.2 L1020.7,546.4 L1021.8,545.2 M1017.2,540 L1016.2,541 L1017.2,542" stroke="#444" stroke-width="0.7" stroke-linecap="round" stroke-linejoin="round"/>
</svg>

<div id="txt">
<span class="t" style="left:31.20px;top:13.07px;font-size:7.0px;line-height:7.0px;letter-spacing:-0.194px;color:#333;">AutoSave</span>
<span class="t" style="left:80.00px;top:12.91px;font-size:7.2px;line-height:7.2px;letter-spacing:-0.157px;color:#333;">Off</span>
<span class="t" style="left:208.50px;top:12.29px;font-size:8.4px;line-height:8.4px;letter-spacing:-0.283px;color:#333;">Presentation1  -  PowerPoint</span>
<span class="t" style="left:424.00px;top:10.87px;font-size:9.6px;line-height:9.6px;letter-spacing:-0.653px;color:#666666;">Search</span>
<span class="t" style="left:13.00px;top:38.71px;font-size:9.2px;line-height:9.2px;letter-spacing:-0.456px;color:#303030;-webkit-text-stroke:0.2px #303030;">File</span>
<span class="t" style="left:43.50px;top:38.71px;font-size:9.2px;line-height:9.2px;letter-spacing:-0.015px;color:#2b2b2b;font-weight:bold;">Home</span>
<span class="t" style="left:81.00px;top:38.71px;font-size:9.2px;line-height:9.2px;letter-spacing:-0.002px;color:#303030;-webkit-text-stroke:0.2px #303030;">Insert</span>
<span class="t" style="left:116.50px;top:38.71px;font-size:9.2px;line-height:9.2px;letter-spacing:0.008px;color:#303030;-webkit-text-stroke:0.2px #303030;">Draw</span>
<span class="t" style="left:150.00px;top:38.71px;font-size:9.2px;line-height:9.2px;letter-spacing:-0.106px;color:#303030;-webkit-text-stroke:0.2px #303030;">Design</span>
<span class="t" style="left:190.50px;top:38.71px;font-size:9.2px;line-height:9.2px;letter-spacing:-0.105px;color:#303030;-webkit-text-stroke:0.2px #303030;">Transitions</span>
<span class="t" style="left:246.50px;top:38.71px;font-size:9.2px;line-height:9.2px;letter-spacing:0.049px;color:#303030;-webkit-text-stroke:0.2px #303030;">Animations</span>
<span class="t" style="left:305.00px;top:38.71px;font-size:9.2px;line-height:9.2px;letter-spacing:-0.203px;color:#303030;-webkit-text-stroke:0.2px #303030;">Slide Show</span>
<span class="t" style="left:362.00px;top:38.71px;font-size:9.2px;line-height:9.2px;letter-spacing:-0.276px;color:#303030;-webkit-text-stroke:0.2px #303030;">Record</span>
<span class="t" style="left:404.00px;top:38.71px;font-size:9.2px;line-height:9.2px;letter-spacing:-0.361px;color:#303030;-webkit-text-stroke:0.2px #303030;">Review</span>
<span class="t" style="left:445.50px;top:38.71px;font-size:9.2px;line-height:9.2px;letter-spacing:-0.194px;color:#303030;-webkit-text-stroke:0.2px #303030;">View</span>
<span class="t" style="left:478.00px;top:38.71px;font-size:9.2px;line-height:9.2px;letter-spacing:-0.230px;color:#303030;-webkit-text-stroke:0.2px #303030;">Help</span>
<span class="t" style="left:509.00px;top:38.71px;font-size:9.2px;line-height:9.2px;letter-spacing:-0.141px;color:#c0452b;">Shape Format</span>
<span class="t" style="left:988.00px;top:38.38px;font-size:9.0px;line-height:9.0px;letter-spacing:-0.603px;color:#ffffff;font-weight:bold;">Share</span>
<span class="t" style="left:17.00px;top:81.97px;font-size:8.3px;line-height:8.3px;letter-spacing:-0.645px;color:#333333;">Paste</span>
<span class="t" style="left:90.00px;top:80.87px;font-size:8.3px;line-height:8.3px;letter-spacing:-0.301px;color:#333333;">New</span>
<span class="t" style="left:85.00px;top:92.17px;font-size:8.3px;line-height:8.3px;letter-spacing:-0.291px;color:#333333;">Slide</span>
<span class="t" style="left:129.00px;top:59.17px;font-size:8.3px;line-height:8.3px;letter-spacing:-0.237px;color:#333333;">Layout</span>
<span class="t" style="left:129.00px;top:76.17px;font-size:8.3px;line-height:8.3px;letter-spacing:-0.536px;color:#333333;">Reset</span>
<span class="t" style="left:129.00px;top:93.37px;font-size:8.3px;line-height:8.3px;letter-spacing:-0.241px;color:#333333;">Section</span>
<span class="t" style="left:181.00px;top:64.97px;font-size:8.3px;line-height:8.3px;letter-spacing:-0.162px;color:#333333;">Calibri (Body)</span>
<span class="t" style="left:295.00px;top:64.97px;font-size:8.3px;line-height:8.3px;letter-spacing:-0.616px;color:#333333;">18</span>
<span class="t" style="left:524.00px;top:59.17px;font-size:8.3px;line-height:8.3px;letter-spacing:-0.091px;color:#333333;">Text Direction</span>
<span class="t" style="left:524.00px;top:76.17px;font-size:8.3px;line-height:8.3px;letter-spacing:-0.083px;color:#333333;">Align Text</span>
<span class="t" style="left:524.00px;top:93.37px;font-size:8.3px;line-height:8.3px;letter-spacing:-0.176px;color:#333333;">Convert to SmartArt</span>
<span class="t" style="left:738.50px;top:80.87px;font-size:8.3px;line-height:8.3px;letter-spacing:-0.290px;color:#333333;">Arrange</span>
<span class="t" style="left:774.50px;top:80.87px;font-size:8.3px;line-height:8.3px;letter-spacing:-0.343px;color:#333333;">Quick</span>
<span class="t" style="left:770.00px;top:92.17px;font-size:8.3px;line-height:8.3px;letter-spacing:-0.434px;color:#333333;">Styles</span>
<span class="t" style="left:817.00px;top:59.17px;font-size:8.3px;line-height:8.3px;letter-spacing:-0.341px;color:#333333;">Shape Fill</span>
<span class="t" style="left:817.00px;top:76.37px;font-size:8.3px;line-height:8.3px;letter-spacing:-0.239px;color:#333333;">Shape Outline</span>
<span class="t" style="left:817.00px;top:93.37px;font-size:8.3px;line-height:8.3px;letter-spacing:-0.310px;color:#333333;">Shape Effects</span>
<span class="t" style="left:905.00px;top:59.17px;font-size:8.3px;line-height:8.3px;letter-spacing:-0.412px;color:#333333;">Find</span>
<span class="t" style="left:905.00px;top:76.37px;font-size:8.3px;line-height:8.3px;letter-spacing:-0.350px;color:#333333;">Replace</span>
<span class="t" style="left:905.00px;top:93.37px;font-size:8.3px;line-height:8.3px;letter-spacing:-0.345px;color:#333333;">Select</span>
<span class="t" style="left:967.00px;top:80.87px;font-size:8.3px;line-height:8.3px;letter-spacing:-0.020px;color:#333333;">Add-ins</span>
<span class="t" style="left:21.00px;top:109.47px;font-size:7.0px;line-height:7.0px;letter-spacing:0.115px;color:#4a4a4a;">Clipboard</span>
<span class="t" style="left:116.50px;top:109.47px;font-size:7.0px;line-height:7.0px;letter-spacing:-0.178px;color:#4a4a4a;">Slides</span>
<span class="t" style="left:265.50px;top:109.47px;font-size:7.0px;line-height:7.0px;letter-spacing:-0.252px;color:#4a4a4a;">Font</span>
<span class="t" style="left:475.50px;top:109.47px;font-size:7.0px;line-height:7.0px;letter-spacing:-0.077px;color:#4a4a4a;">Paragraph</span>
<span class="t" style="left:730.00px;top:109.47px;font-size:7.0px;line-height:7.0px;letter-spacing:-0.097px;color:#4a4a4a;">Drawing</span>
<span class="t" style="left:911.00px;top:109.47px;font-size:7.0px;line-height:7.0px;letter-spacing:-0.058px;color:#4a4a4a;">Editing</span>
<span class="t" style="left:969.00px;top:109.47px;font-size:7.0px;line-height:7.0px;letter-spacing:-0.034px;color:#4a4a4a;">Add-ins</span>
<span class="t" style="left:184.80px;top:84.81px;font-size:9.2px;line-height:9.2px;letter-spacing:-1.444px;color:#3b3b3b;font-weight:bold;">B</span>
<span class="t" style="left:202.80px;top:84.39px;font-size:9.8px;line-height:9.8px;letter-spacing:-0.014px;color:#3b3b3b;font-weight:bold;font-style:italic;font-family:"Liberation Serif",serif;">I</span>
<span class="t" style="left:218.30px;top:84.75px;font-size:8.8px;line-height:8.8px;letter-spacing:-0.955px;color:#3b3b3b;">U</span>
<span class="t" style="left:235.30px;top:84.64px;font-size:9.4px;line-height:9.4px;letter-spacing:-0.770px;color:#3b3b3b;text-shadow:0.7px 0.7px 0 #8a8a8a;">S</span>
<span class="t" style="left:251.60px;top:84.44px;font-size:9.4px;line-height:9.4px;letter-spacing:-0.728px;color:#444;">ab</span>
<span class="t" style="left:268.00px;top:82.72px;font-size:8.6px;line-height:8.6px;letter-spacing:-0.117px;color:#3b3b3b;">AV</span>
<span class="t" style="left:296.00px;top:85.04px;font-size:9.4px;line-height:9.4px;letter-spacing:-0.249px;color:#3b3b3b;">Aa</span>
<span class="t" style="left:327.50px;top:61.61px;font-size:11.8px;line-height:11.8px;letter-spacing:0.129px;color:#4a4a4a;">A</span>
<span class="t" style="left:346.00px;top:63.81px;font-size:9.2px;line-height:9.2px;letter-spacing:0.064px;color:#4a4a4a;">A</span>
<span class="t" style="left:363.00px;top:61.95px;font-size:11.4px;line-height:11.4px;letter-spacing:-0.204px;color:#4a4a4a;">A</span>
<span class="t" style="left:354.60px;top:83.10px;font-size:9.8px;line-height:9.8px;letter-spacing:0.263px;color:#444;">A</span>
<span class="t" style="left:6.25px;top:537.87px;font-size:7.0px;line-height:7.0px;letter-spacing:0.010px;color:#4a4a4a;">Slide 1 of 1</span>
<span class="t" style="left:75.80px;top:537.87px;font-size:7.0px;line-height:7.0px;letter-spacing:-0.103px;color:#4a4a4a;">English (India)</span>
<span class="t" style="left:142.70px;top:537.87px;font-size:7.0px;line-height:7.0px;letter-spacing:-0.090px;color:#222;font-weight:bold;">Accessibility: Investigate</span>
<span class="t" style="left:758.70px;top:537.87px;font-size:7.0px;line-height:7.0px;letter-spacing:0.003px;color:#333;">Notes</span>
<span class="t" style="left:995.00px;top:537.87px;font-size:7.0px;line-height:7.0px;letter-spacing:-0.670px;color:#4a4a4a;">78%</span>
<span class="t" style="left:162.20px;top:516.84px;font-size:10.0px;line-height:10.0px;letter-spacing:-0.077px;color:#6a6a6a;">Click to add notes</span>
<span class="t" style="left:7.70px;top:130.57px;font-size:9.6px;line-height:9.6px;letter-spacing:-2.139px;color:#c2492c;">1</span>
</div>
</body></html>
